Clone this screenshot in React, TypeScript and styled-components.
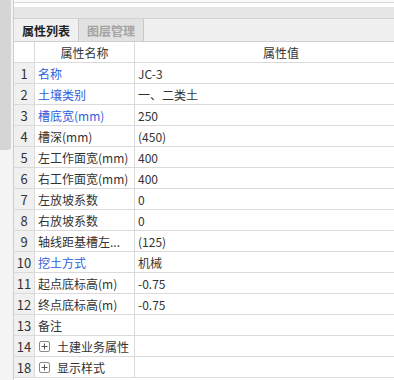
import React from "react";
import styled, { createGlobalStyle } from "styled-components";

const GlobalStyle = createGlobalStyle`
  body {
    margin: 0;
    background: #ffffff;
    font-family: "Noto Sans CJK SC", "Noto Sans", sans-serif;
  }
`;

const Frame = styled.div`
  display: flex;
  width: 394px;
  height: 380px;
  overflow: hidden;
  background: #ffffff;
`;

const SideStrip = styled.div`
  width: 13px;
  flex-shrink: 0;
  background: #f4f4f4;
  border-right: 1px solid #cdcdcd;
  display: flex;
  flex-direction: column;
`;

const Thumb = styled.div`
  width: 11px;
  height: 150px;
  background: #d5d5d5;
  border-bottom-right-radius: 3px;
`;

const Panel = styled.div`
  flex: 1;
  min-width: 0;
  display: flex;
  flex-direction: column;
  overflow: hidden;
`;

const TopEdge = styled.div`
  height: 2px;
  background: #fafafa;
  border-bottom: 1px solid #d6d6d6;
`;

const Spacer = styled.div`
  height: 4px;
  background: #ffffff;
`;

const Band = styled.div`
  height: 11px;
  background: #e6e6e6;
  border-bottom: 1px solid #d2d2d2;
`;

const TabBar = styled.div`
  height: 22px;
  display: flex;
  background: #f0f0f0;
  border-bottom: 1px solid #cfcfcf;
`;

const Tab = styled.div<{ $active?: boolean }>`
  width: 64px;
  display: flex;
  align-items: center;
  justify-content: center;
  font-size: 12px;
  font-weight: bold;
  color: ${(p) => (p.$active ? "#222222" : "#a3a3a3")};
  background: ${(p) => (p.$active ? "#f0f0f0" : "#e2e2e2")};
  border-right: 1px solid #c9c9c9;
`;

const Table = styled.div`
  width: 414px;
  display: flex;
  flex-direction: column;
`;

const Row = styled.div`
  display: grid;
  grid-template-columns: 21px 100px 1fr;
  height: 20px;
  border-bottom: 1px solid #dadada;
  font-size: 12px;
  color: #333333;
`;

const Cell = styled.div<{ $center?: boolean; $grey?: boolean; $blue?: boolean }>`
  display: flex;
  align-items: center;
  justify-content: ${(p) => (p.$center ? "center" : "flex-start")};
  padding: ${(p) => (p.$center ? "0" : "0 0 0 3px")};
  background: ${(p) => (p.$grey ? "#f0f0f0" : "#ffffff")};
  color: ${(p) => (p.$blue ? "#2d5fe0" : "#333333")};
  border-right: 1px solid #dadada;
  white-space: nowrap;
  overflow: hidden;
`;

const Num = styled(Cell)`
  font-size: 13px;
`;

const ExpandBox = styled.span`
  width: 9px;
  height: 9px;
  margin: 0 7px 0 1px;
  border: 1px solid #8a8a8a;
  border-radius: 2px;
  display: inline-flex;
  align-items: center;
  justify-content: center;
  flex-shrink: 0;
`;

const rows: { no: string; name: string; value: string; blue?: boolean; group?: boolean }[] = [
  { no: "1", name: "名称", value: "JC-3", blue: true },
  { no: "2", name: "土壤类别", value: "一、二类土", blue: true },
  { no: "3", name: "槽底宽(mm)", value: "250", blue: true },
  { no: "4", name: "槽深(mm)", value: "(450)" },
  { no: "5", name: "左工作面宽(mm)", value: "400" },
  { no: "6", name: "右工作面宽(mm)", value: "400" },
  { no: "7", name: "左放坡系数", value: "0" },
  { no: "8", name: "右放坡系数", value: "0" },
  { no: "9", name: "轴线距基槽左...", value: "(125)" },
  { no: "10", name: "挖土方式", value: "机械", blue: true },
  { no: "11", name: "起点底标高(m)", value: "-0.75" },
  { no: "12", name: "终点底标高(m)", value: "-0.75" },
  { no: "13", name: "备注", value: "" },
  { no: "14", name: "土建业务属性", value: "", group: true },
  { no: "18", name: "显示样式", value: "", group: true },
];

const Plus = () => (
  <svg width="7" height="7" viewBox="0 0 7 7">
    <path d="M0.5 3.5H6.5M3.5 0.5V6.5" stroke="#555" strokeWidth="1" />
  </svg>
);

export default function App() {
  return (
    <>
      <GlobalStyle />
      <Frame>
        <SideStrip>
          <Thumb />
        </SideStrip>
        <Panel>
          <TopEdge />
          <Spacer />
          <Band />
          <TabBar>
            <Tab $active>属性列表</Tab>
            <Tab>图层管理</Tab>
          </TabBar>
          <Table>
            <Row>
              <Cell $center />
              <Cell $center>属性名称</Cell>
              <Cell $center>属性值</Cell>
            </Row>
            {rows.map((r) => (
              <Row key={r.no}>
                <Num $center $grey>
                  {r.no}
                </Num>
                <Cell $blue={r.blue}>
                  {r.group && (
                    <ExpandBox>
                      <Plus />
                    </ExpandBox>
                  )}
                  {r.name}
                </Cell>
                <Cell>{r.value}</Cell>
              </Row>
            ))}
          </Table>
        </Panel>
      </Frame>
    </>
  );
}
